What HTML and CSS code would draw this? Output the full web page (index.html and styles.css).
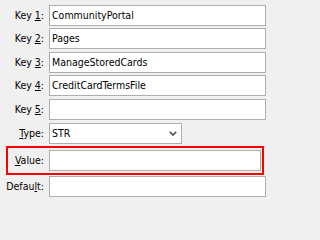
FILE: index.html
```html
<!DOCTYPE html>
<html>
<head>
<meta charset="utf-8">
<link rel="stylesheet" href="styles.css">
</head>
<body>
<div class="form">
  <div class="keys">
    <div class="row"><span class="lbl">Key <u>1</u>:</span><div class="field">CommunityPortal</div></div>
    <div class="row"><span class="lbl">Key <u>2</u>:</span><div class="field">Pages</div></div>
    <div class="row"><span class="lbl">Key <u>3</u>:</span><div class="field">ManageStoredCards</div></div>
    <div class="row"><span class="lbl">Key <u>4</u>:</span><div class="field">CreditCardTermsFile</div></div>
    <div class="row"><span class="lbl">Key <u>5</u>:</span><div class="field"></div></div>
  </div>
  <div class="row type-row">
    <span class="lbl"><u>T</u>ype:</span>
    <div class="select"><span>STR</span><svg class="chev" width="8" height="5" viewBox="0 0 8 5"><polyline points="0.8,0.8 4,4 7.2,0.8" fill="none" stroke="#555" stroke-width="1.7"/></svg></div>
  </div>
  <div class="value-frame">
    <div class="row inner-row"><span class="lbl"><u>V</u>alue:</span><div class="field"></div></div>
  </div>
  <div class="row default-row"><span class="lbl">Defau<u>l</u>t:</span><div class="field"></div></div>
</div>
</body>
</html>
```

FILE: styles.css
```css
html, body {
  margin: 0;
  padding: 0;
  background: #f0f0f0;
}
body {
  width: 271px;
  height: 202px;
  overflow: hidden;
  font-family: "DejaVu Sans Condensed", "Liberation Sans", Arial, sans-serif;
  font-size: 10.5px;
  color: #000;
}
.form {
  padding: 5px 5px 0 0;
  display: flex;
  flex-direction: column;
}
.keys {
  display: flex;
  flex-direction: column;
  gap: 2.4px;
}
.row {
  display: grid;
  grid-template-columns: 44px 1fr;
  column-gap: 5px;
  height: 21px;
}
.lbl {
  text-align: right;
  line-height: 21px;
  white-space: nowrap;
}
.lbl u {
  text-underline-offset: 1px;
}
.field {
  box-sizing: border-box;
  height: 21px;
  border: 1px solid #adadad;
  background: #fff;
  padding: 0 2px;
  line-height: 19px;
  white-space: nowrap;
  overflow: hidden;
}
.type-row {
  margin-top: 3px;
}
.select {
  box-sizing: border-box;
  width: 133px;
  height: 21px;
  border: 1px solid #adadad;
  background: #fff;
  padding: 0 0 0 2px;
  line-height: 19px;
  display: flex;
  align-items: center;
  justify-content: space-between;
}
.chev {
  margin-right: 4px;
  display: block;
}
.value-frame {
  margin: 2px 2px 0 6px;
  border: 2px solid #ff0000;
  padding: 2px 1px 2px 0;
}
.inner-row {
  grid-template-columns: 36px 1fr;
}
.default-row {
  margin-top: 1px;
}
```
